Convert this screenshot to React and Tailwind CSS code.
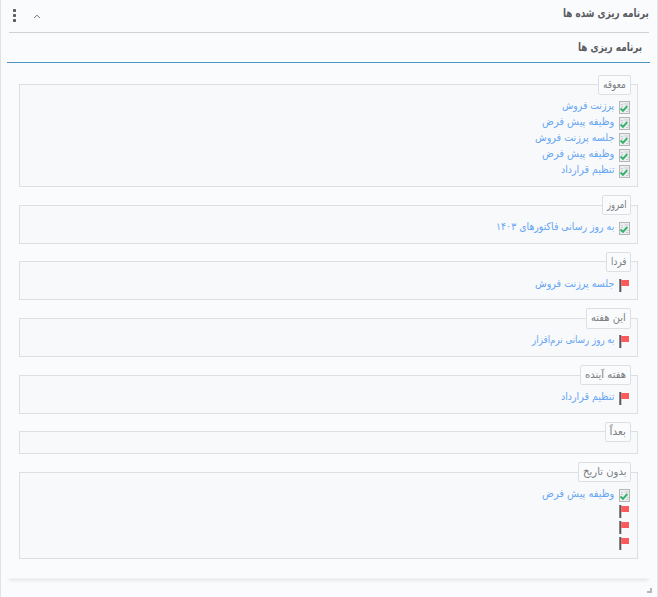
import { useLayoutEffect, useRef } from 'react';

// Single-line label condensed horizontally to a given width, anchored right.
function FitText({ width, children }) {
  const ref = useRef(null);
  useLayoutEffect(() => {
    const el = ref.current;
    el.style.transform = `scaleX(${width / el.offsetWidth})`;
  }, [width]);
  return (
    <span className="block whitespace-nowrap" style={{ width }}>
      <span ref={ref} className="inline-block origin-right">
        {children}
      </span>
    </span>
  );
}

function TaskIcon() {
  return (
    <svg width="12" height="14" viewBox="0 0 12 14" className="shrink-0">
      <rect x="0.5" y="0.5" width="10" height="12" fill="#eceef0" stroke="#b4b6b8" />
      <path d="M2 3.500h2M5.500 3h4M2 5.500h2M8 8.500h2M7 10.500h2.500" stroke="#c9cbcd" strokeWidth="1" />
      <path d="M1.500 7.500L4 9.800L8.300 5" fill="none" stroke="#35b26e" strokeWidth="2" />
    </svg>
  );
}

function FlagIcon() {
  return (
    <svg width="12" height="14" viewBox="0 0 12 14" className="shrink-0">
      <rect x="0.300" y="0" width="2" height="13" fill="#55585c" />
      <rect x="2.200" y="1" width="7.800" height="6" fill="#ff5a5b" />
    </svg>
  );
}

const task = (text, width) => ({ icon: 'task', text, width });
const flag = (text, width) => ({ icon: 'flag', text, width });

const groups = [
  {
    title: 'معوقه', width: 23, box: 'h-[112px] mb-[8px]', legend: 'h-[19.8px]', body: 'pt-[3.2px]',
    rows: [
      task('پرزنت فروش', 52),
      task('وظیفه پیش فرض', 72),
      task('جلسه پرزنت فروش', 79),
      task('وظیفه پیش فرض', 72),
      task('تنظیم قرارداد', 53),
    ],
  },
  { title: 'امروز', width: 19, box: 'h-[49px] mb-[8px]', legend: 'h-[20px]', body: 'pt-[4px]', rows: [task('به روز رسانی فاکتورهای ۱۴۰۳', 118)] },
  { title: 'فردا', width: 15, box: 'h-[48px] mb-[8px]', legend: 'h-[19.8px]', body: 'pt-[4.2px]', rows: [flag('جلسه پرزنت فروش', 79)] },
  { title: 'این هفته', width: 35, box: 'h-[49px] mb-[8px]', legend: 'h-[21px]', body: 'pt-[3px]', rows: [flag('به روز رسانی نرم‌افزار', 82)] },
  { title: 'هفته آینده', width: 41, box: 'h-[49px] mb-[8px]', legend: 'h-[20px]', body: 'pt-[4px]', rows: [flag('تنظیم قرارداد', 53)] },
  { title: 'بعداً', width: 16, box: 'h-[32px] mb-[8px]', legend: 'h-[19.8px]', body: '', rows: [] },
  {
    title: 'بدون تاریخ', width: 43, box: 'h-[97px]', legend: 'h-[20px]', body: 'pt-[4px]',
    rows: [task('وظیفه پیش فرض', 72), flag(), flag(), flag()],
  },
];

function Group({ group }) {
  return (
    <fieldset className={`mx-[12px] border border-[#dddfe2] bg-[#f8f9fb] px-[6px] ${group.box}`}>
      <legend
        className={`flex items-start rounded-[2px] border border-[#dddfe2] bg-[#fafbfd] px-[4px] text-[10.5px] leading-[16px] text-[#7b7d82] ${group.legend}`}
      >
        <FitText width={group.width}>{group.title}</FitText>
      </legend>
      <div className={group.body}>
        {group.rows.map((row, i) => (
          <div key={i} className="flex h-[16px] items-start gap-[5px]">
            <span className="pt-[3px]">{row.icon === 'task' ? <TaskIcon /> : <FlagIcon />}</span>
            {row.text && (
              <a className="text-[10.5px] leading-[14px] text-[#66a5f3]">
                <FitText width={row.width}>{row.text}</FitText>
              </a>
            )}
          </div>
        ))}
      </div>
    </fieldset>
  );
}

export default function App() {
  return (
    <div
      dir="rtl"
      className="flex h-[597px] w-[658px] flex-col overflow-hidden border-x border-[#dfe3e8] bg-[#fafbfd] font-['DejaVu_Sans',sans-serif]"
    >
      <header className="mx-[8px] flex h-[33px] shrink-0 items-start justify-between border-b border-[#cfd1d4] text-[#5a5c61]">
        <h1 className="pt-[4px] text-[11.5px] leading-[19px] font-bold">
          <FitText width={86}>برنامه ریزی شده ها</FitText>
        </h1>
        <div className="flex items-start gap-[16px] pl-[3px]">
          <svg width="8" height="6" viewBox="0 0 8 6" className="mt-[14px]">
            <path d="M1 4L4 1.200L7 4" fill="none" stroke="#77797e" />
          </svg>
          <svg width="5" height="14" viewBox="0 0 5 14" className="mt-[9px]" fill="#5a5c60">
            <rect x="1" y="0" width="3" height="3" rx="0.800" />
            <rect x="1" y="5" width="3" height="3" rx="0.800" />
            <rect x="1" y="10" width="3" height="3" rx="0.800" />
          </svg>
        </div>
      </header>
      <main className="mr-[7px] ml-[6px] h-[546px] shrink-0 border-b border-[#f1f2f4] shadow-[0_4px_3px_-2px_rgba(0,0,0,0.08)]">
        <h2 className="mb-[12px] flex h-[30px] items-start border-b border-[#4d94c5] pt-[5px] pr-[8px] text-[11.5px] leading-[19px] font-bold text-[#5a5c61]">
          <FitText width={64}>برنامه ریزی ها</FitText>
        </h2>
        {groups.map((group) => (
          <Group key={group.title} group={group} />
        ))}
      </main>
      <footer className="flex h-[18px] items-end justify-start pr-[5px] pb-[4px]">
        <span className="h-[5px] w-[5px] border-r-2 border-b-2 border-[#b5b7ba]" />
      </footer>
    </div>
  );
}
